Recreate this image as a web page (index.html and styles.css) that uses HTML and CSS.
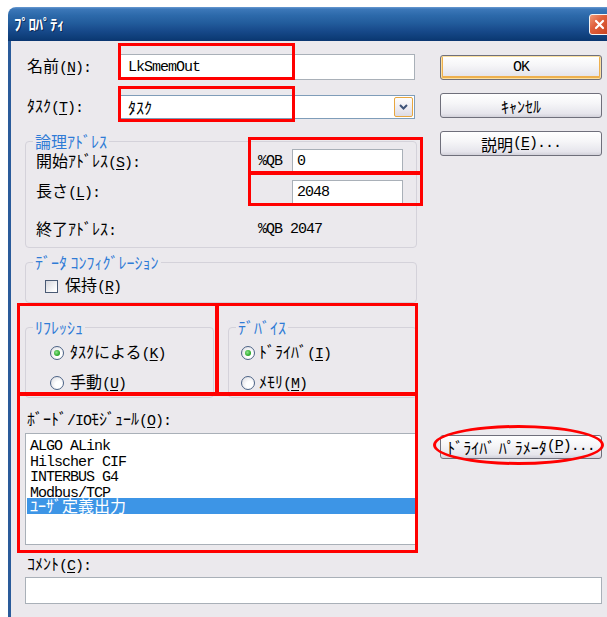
FILE: index.html
```html
<!DOCTYPE html>
<html lang="ja">
<head>
<meta charset="utf-8">
<title>プロパティ</title>
<link rel="stylesheet" href="styles.css">
</head>
<body>
<div class="window">
  <div class="titlebar">
    <span class="title">ﾌﾟﾛﾊﾟﾃｨ</span>
    <span class="close">
      <svg width="11" height="11" viewBox="0 0 11 11"><path d="M2 2l7 7M9 2l-7 7" stroke="#fff" stroke-width="2.2" stroke-linecap="round"/></svg>
    </span>
  </div>
  <div class="frame">
    <div class="dlg">
      <div class="fields">
        <div class="row row-name">
          <label class="lbl">名前<span class="en">(<u>N</u>):</span></label>
          <input class="edit edit-wide" type="text" value="LkSmemOut">
        </div>
        <div class="row row-task">
          <label class="lbl">ﾀｽｸ<span class="en">(<u>T</u>):</span></label>
          <div class="combo">
            <span class="combo-text">ﾀｽｸ</span>
            <span class="drop">
              <svg width="9" height="6" viewBox="0 0 9 6"><path d="M1 1l3.5 3.5L8 1" fill="none" stroke="#3f5478" stroke-width="2"/></svg>
            </span>
          </div>
        </div>

        <fieldset class="group grp-addr">
          <legend>論理ｱﾄﾞﾚｽ</legend>
          <div class="addr-row addr-start">
            <span>開始ｱﾄﾞﾚｽ<span class="en">(<u>S</u>):</span></span>
            <span class="en">%QB</span>
            <input class="edit edit-small" type="text" value="0">
          </div>
          <div class="addr-row addr-len">
            <span>長さ<span class="en">(<u>L</u>):</span></span>
            <span></span>
            <input class="edit edit-small" type="text" value="2048">
          </div>
          <div class="addr-row addr-end">
            <span>終了ｱﾄﾞﾚｽ<span class="en">:</span></span>
            <span class="en addr-value">%QB 2047</span>
          </div>
        </fieldset>

        <fieldset class="group grp-data">
          <legend>ﾃﾞｰﾀ ｺﾝﾌｨｸﾞﾚｰｼｮﾝ</legend>
          <div class="opt opt-keep"><span class="check"></span><span>保持<span class="en">(<u>R</u>)</span></span></div>
        </fieldset>

        <div class="pair">
          <fieldset class="group grp-refresh">
            <legend>ﾘﾌﾚｯｼｭ</legend>
            <div class="opt opt-first"><span class="radio on"></span><span>ﾀｽｸによる<span class="en">(<u>K</u>)</span></span></div>
            <div class="opt opt-second"><span class="radio"></span><span>手動<span class="en">(<u>U</u>)</span></span></div>
          </fieldset>
          <fieldset class="group grp-device">
            <legend>ﾃﾞﾊﾞｲｽ</legend>
            <div class="opt opt-first"><span class="radio on"></span><span>ﾄﾞﾗｲﾊﾞ<span class="en">(<u>I</u>)</span></span></div>
            <div class="opt opt-second"><span class="radio"></span><span>ﾒﾓﾘ<span class="en">(<u>M</u>)</span></span></div>
          </fieldset>
        </div>
      </div>

      <div class="buttons">
        <div class="btn btn-default"><span class="en">OK</span></div>
        <div class="btn">ｷｬﾝｾﾙ</div>
        <div class="btn">説明<span class="en">(<u>E</u>)...</span></div>
      </div>

      <div class="board">
        <div class="board-label">ﾎﾞｰﾄﾞ<span class="en">/IO</span>ﾓｼﾞｭｰﾙ<span class="en">(<u>O</u>):</span></div>
        <ul class="listbox">
          <li><span class="en">ALGO ALink</span></li>
          <li><span class="en">Hilscher CIF</span></li>
          <li><span class="en">INTERBUS G4</span></li>
          <li><span class="en">Modbus/TCP</span></li>
          <li class="sel">ﾕｰｻﾞ定義出力</li>
        </ul>
      </div>

      <div class="board-side">
        <div class="btn btn-driver">ﾄﾞﾗｲﾊﾞ ﾊﾟﾗﾒｰﾀ<span class="en">(<u>P</u>)...</span></div>
      </div>

      <div class="comment">
        <div class="comment-label">ｺﾒﾝﾄ<span class="en">(<u>C</u>):</span></div>
        <input class="edit edit-comment" type="text" value="">
      </div>
    </div>
  </div>
</div>

<div class="marks">
  <span class="mark mark-name"></span>
  <span class="mark mark-task"></span>
  <span class="mark mark-start"></span>
  <span class="mark mark-len"></span>
  <span class="mark mark-refresh"></span>
  <span class="mark mark-device"></span>
  <span class="mark mark-board"></span>
  <span class="mark mark-driver"></span>
</div>
</body>
</html>
```

FILE: styles.css
```css
html, body {
  margin: 0;
  padding: 0;
  overflow: hidden;
}

body {
  position: relative;
  width: 607px;
  height: 617px;
  background: #fff;
  color: #000;
  font-family: "Noto Sans CJK JP", sans-serif;
  font-size: 16px;
  line-height: 16px;
}

/* half-width latin runs, monospaced like the dialog font */
.en {
  font-family: "Liberation Mono", "Noto Sans CJK JP", monospace;
  font-size: 15px;
  letter-spacing: -1px;
}

u {
  text-underline-offset: 2px;
}

/* window chrome */
.window {
  margin: 7px 0 0 8px;
  width: 607px;
}

.titlebar {
  height: 34px;
  box-sizing: border-box;
  padding: 0 5px 0 6px;
  display: flex;
  align-items: center;
  border-radius: 8px 8px 0 0;
  background: linear-gradient(to bottom,
    #6a9bd2 0px, #3c78b9 2px, #2d6aab 8px, #225c9c 16px,
    #17498a 24px, #0d3d78 31px, #0a3570 34px);
}

.title {
  color: #fff;
  font-weight: bold;
  font-size: 15px;
  letter-spacing: -0.5px;
  text-shadow: 1px 1px 0 #0a2a58;
}

.close {
  margin-left: auto;
  width: 21px;
  height: 21px;
  box-sizing: border-box;
  border: 1px solid #f4f4f4;
  border-radius: 3px;
  background: linear-gradient(135deg, #f09a78 0%, #e0603c 40%, #c9421f 100%);
  display: flex;
  align-items: center;
  justify-content: center;
}

.frame {
  height: 576px;
  box-sizing: border-box;
  padding: 13px 0 0 14px;
  background: #ebe9ed;
  border-left: 3px solid #2a5b9a;
}

.dlg {
  display: grid;
  grid-template-columns: 392px 162px;
  column-gap: 23px;
}

/* left column: fields and group boxes */
.fields {
  grid-column: 1;
  grid-row: 1;
}

.row {
  display: flex;
  align-items: center;
}

.row-name {
  height: 26px;
}

.row-task {
  margin-top: 15px;
  height: 24px;
}

.lbl {
  width: 93px;
  padding-left: 2px;
}

.edit {
  box-sizing: border-box;
  margin: 0;
  border: 1px solid #a9b0b8;
  background: #fff;
  color: #000;
  outline: none;
  font-family: "Liberation Mono", monospace;
  font-size: 15px;
  letter-spacing: -1px;
}

.edit-wide {
  width: 295px;
  height: 26px;
  padding: 0 7px;
}

.edit-small {
  width: 111px;
  height: 100%;
  padding: 0 4px;
}

.edit-comment {
  width: 577px;
  height: 27px;
  padding: 0 4px;
  display: block;
}

.combo {
  width: 295px;
  height: 24px;
  box-sizing: border-box;
  border: 1px solid #7f9db9;
  background: #fff;
  display: flex;
  align-items: center;
  padding-left: 7px;
}

.drop {
  margin-left: auto;
  margin-right: 1px;
  width: 19px;
  height: 20px;
  box-sizing: border-box;
  border: 1px solid #e8a63e;
  border-radius: 2px;
  background: linear-gradient(#fdfdfd, #eceaf0 60%, #dddbe4);
  display: flex;
  align-items: center;
  justify-content: center;
}

/* group boxes */
.group {
  margin: 0;
  padding: 0;
  min-width: 0;
  border: 1px solid #d4d2da;
  border-radius: 4px;
}

.group legend {
  margin-left: 7px;
  padding: 0 2px;
  color: #2f7bd6;
  line-height: 16px;
}

.grp-addr {
  margin-top: 14px;
}

.addr-row {
  display: grid;
  grid-template-columns: 222px 34px 111px;
  align-items: center;
  padding-left: 10px;
}

.addr-start {
  height: 25px;
}

.addr-len {
  margin-top: 6px;
  height: 24px;
}

.addr-end {
  margin-top: 16px;
  margin-bottom: 11px;
  height: 16px;
}

.addr-value {
  grid-column: 2 / span 2;
}

.grp-data {
  margin-top: 6px;
}

.opt {
  display: flex;
  align-items: center;
  height: 16px;
}

.opt-keep {
  margin: 8px 0 8px 19px;
  gap: 7px;
}

.pair {
  margin-top: 16px;
  display: flex;
  gap: 14px;
}

.pair .group {
  flex: 1;
}

.opt-first {
  margin-top: 10px;
}

.opt-second {
  margin-top: 14px;
  margin-bottom: 6px;
}

.grp-refresh .opt {
  padding-left: 24px;
  gap: 6px;
}

.grp-device .opt {
  padding-left: 12px;
  gap: 4px;
}

.check {
  width: 13px;
  height: 13px;
  box-sizing: border-box;
  border: 1px solid #4a5a74;
  background: linear-gradient(135deg, #d6d6dc, #fff 85%);
}

.radio {
  width: 14px;
  height: 14px;
  box-sizing: border-box;
  border: 1px solid #4b6386;
  border-radius: 50%;
  background: radial-gradient(circle at 65% 65%, #fff 30%, #d8d8de 100%);
  display: flex;
  align-items: center;
  justify-content: center;
}

.radio.on::after {
  content: "";
  width: 6px;
  height: 6px;
  border-radius: 50%;
  background: radial-gradient(circle at 40% 40%, #8be48b, #23a423 70%);
}

/* right column buttons */
.buttons {
  grid-column: 2;
  grid-row: 1;
  padding-top: 1px;
  display: flex;
  flex-direction: column;
  gap: 13px;
}

.btn {
  height: 25px;
  box-sizing: border-box;
  border: 1px solid #6f6f7b;
  border-radius: 3px;
  background: linear-gradient(#ffffff 0%, #f6f6f8 40%, #e6e5ec 85%, #d2d1da 100%);
  display: flex;
  align-items: center;
  justify-content: center;
  white-space: nowrap;
}

.btn-default {
  box-shadow: inset 0 0 0 1px #fbe0a0, inset 0 -1px 0 2px #eeb04e;
}

/* module list */
.board {
  grid-column: 1;
  grid-row: 2;
}

.board-label {
  margin-top: 12px;
  padding-left: 2px;
  height: 16px;
}

.listbox {
  margin: 7px 0 0;
  padding: 2px 1px 0;
  height: 112px;
  box-sizing: border-box;
  list-style: none;
  border: 1px solid #a9b0b8;
  background: #fff;
}

.listbox li {
  height: 15.5px;
  line-height: 15.5px;
  padding-left: 3px;
  white-space: nowrap;
}

.listbox li.sel {
  background: #3d95e6;
  color: #fff;
}

.board-side {
  grid-column: 2;
  grid-row: 2;
}

.btn-driver {
  margin-top: 37px;
  height: 24px;
  overflow: visible;
}

/* comment */
.comment {
  grid-column: 1 / span 2;
  grid-row: 3;
}

.comment-label {
  margin-top: 10px;
  padding-left: 2px;
  height: 16px;
  margin-bottom: 6px;
}

/* red annotation outlines drawn over the dialog */
.marks {
  position: absolute;
  inset: 0;
  pointer-events: none;
}

.mark {
  position: absolute;
  box-sizing: border-box;
  border: 3px solid #f00;
}

.mark-name    { left: 118px; top: 43px;  width: 177px; height: 37px; }
.mark-task    { left: 118px; top: 86px;  width: 177px; height: 36px; }
.mark-start   { left: 248px; top: 137px; width: 175px; height: 37px; }
.mark-len     { left: 248px; top: 172px; width: 175px; height: 34px; }
.mark-refresh { left: 17px;  top: 303px; width: 201px; height: 92px; }
.mark-device  { left: 216px; top: 303px; width: 202px; height: 92px; }
.mark-board   { left: 17px;  top: 393px; width: 401px; height: 160px; }
.mark-driver  { left: 433px; top: 425px; width: 171px; height: 40px; border-radius: 50%; }
```
